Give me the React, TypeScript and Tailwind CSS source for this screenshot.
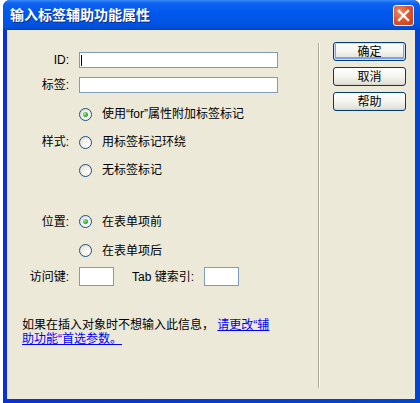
import React from 'react';

function Radio({ checked }: { checked?: boolean }) {
  return (
    <span className="w-[13px] h-[13px] shrink-0 rounded-full border border-[#1C5180] bg-[radial-gradient(circle_at_70%_70%,#ffffff_0%,#F4F3EE_45%,#D6D4CA_100%)] flex items-center justify-center">
      {checked && (
        <span className="w-[5px] h-[5px] rounded-full bg-[radial-gradient(circle_at_35%_35%,#A8EBA8_0%,#2DB52D_55%,#1E911E_100%)]" />
      )}
    </span>
  );
}

function XpButton({ label, primary }: { label: string; primary?: boolean }) {
  return (
    <button
      className={
        'w-[73px] h-[19px] rounded-[3px] border border-[#003C74] bg-[linear-gradient(to_bottom,#FFFFFF_0%,#F4F4F0_50%,#E3E2DA_90%,#D6D0C5_100%)] text-[12px] leading-none text-black flex items-center justify-center ' +
        (primary
          ? 'shadow-[inset_0_0_0_1px_#CEDDF8,inset_0_-1px_0_2px_#7EA2E6]'
          : '')
      }
    >
      {label}
    </button>
  );
}

function Label({ text }: { text: string }) {
  return <div className="w-[72px] shrink-0 text-right pr-[10px] text-[12px] leading-none">{text}</div>;
}

export default function App() {
  return (
    <div className="w-[420px] h-[403px] bg-white overflow-hidden flex font-['Liberation_Sans','Noto_Sans_CJK_SC',sans-serif] text-black">
      <div className="w-[3px] shrink-0 bg-white" />
      <div className="flex-1 flex flex-col h-[410px] rounded-t-[7px] bg-[#0831D9] overflow-hidden">
        {/* title bar */}
        <div className="h-[30px] shrink-0 flex items-center pl-[7px] pr-[6px] bg-[linear-gradient(to_bottom,#3B8BF5_0%,#0F63F2_10%,#0058EE_40%,#0055E5_75%,#004FD8_92%,#0043C2_100%)]">
          <div className="flex-1 text-white font-bold text-[14px] leading-none [text-shadow:1px_1px_0_#0C2A8C]">
            输入标签辅助功能属性
          </div>
          <div className="w-[21px] h-[21px] rounded-[3px] border border-white bg-[radial-gradient(circle_at_30%_30%,#F08A6A_0%,#E0552F_45%,#C23B14_100%)] flex items-center justify-center">
            <svg width="13" height="13" viewBox="0 0 13 13">
              <path d="M2 2 L11 11 M11 2 L2 11" stroke="#fff" strokeWidth="2.4" strokeLinecap="square" />
            </svg>
          </div>
        </div>

        {/* body */}
        <div className="flex-1 flex px-[4px] pb-[4px] bg-[linear-gradient(to_right,#0831D9,#0046D5)]">
          <div className="h-[369px] w-[408px] bg-[#ECE9D8] flex">
            {/* left */}
            <div className="w-[311px] shrink-0 pt-[22px]">
              <div className="flex items-center h-[16px]">
                <Label text="ID:" />
                <div className="w-[199px] h-[16px] border border-[#7F9DB9] bg-white flex items-center pl-[1px]">
                  <span className="w-[1px] h-[11px] bg-black" />
                </div>
              </div>
              <div className="flex items-center h-[16px] mt-[9px]">
                <Label text="标签:" />
                <div className="w-[199px] h-[16px] border border-[#7F9DB9] bg-white" />
              </div>

              <div className="flex mt-[7px]">
                <div className="flex items-center">
                  <Label text="样式:" />
                </div>
                <div className="flex flex-col text-[12px] leading-none">
                  <div className="h-[28px] flex items-center gap-[10px]">
                    <Radio checked />
                    <span>使用“for”属性附加标签标记</span>
                  </div>
                  <div className="h-[28px] flex items-center gap-[10px]">
                    <Radio />
                    <span>用标签标记环绕</span>
                  </div>
                  <div className="h-[28px] flex items-center gap-[10px]">
                    <Radio />
                    <span>无标签标记</span>
                  </div>
                </div>
              </div>

              <div className="flex mt-[23px]">
                <div className="h-[29px] flex items-center">
                  <Label text="位置:" />
                </div>
                <div className="flex flex-col text-[12px] leading-none">
                  <div className="h-[29px] flex items-center gap-[10px]">
                    <Radio checked />
                    <span>在表单项前</span>
                  </div>
                  <div className="h-[29px] flex items-center gap-[10px]">
                    <Radio />
                    <span>在表单项后</span>
                  </div>
                </div>
              </div>

              <div className="flex items-center h-[19px] mt-[2px] text-[12px] leading-none">
                <Label text="访问键:" />
                <div className="w-[35px] h-[19px] border border-[#7F9DB9] bg-white" />
                <span className="ml-[18px] w-[72px]">Tab 键索引:</span>
                <div className="w-[35px] h-[19px] border border-[#7F9DB9] bg-white" />
              </div>

              <p className="mt-[32px] pl-[15px] text-[12px] leading-[14px]">
                如果在插入对象时不想输入此信息，{' '}
                <a href="#" className="text-[#0000FF] underline">
                  请更改“辅
                  <br />
                  助功能“首选参数。
                </a>
              </p>
            </div>

            {/* separator */}
            <div className="w-[2px] shrink-0 mt-[13px] mb-[11px] border-l border-[#ACA899] border-r border-r-white" />

            {/* buttons */}
            <div className="flex flex-col gap-[6px] pl-[13px] pt-[12px]">
              <XpButton label="确定" primary />
              <XpButton label="取消" />
              <XpButton label="帮助" />
            </div>
          </div>
        </div>
      </div>
    </div>
  );
}
